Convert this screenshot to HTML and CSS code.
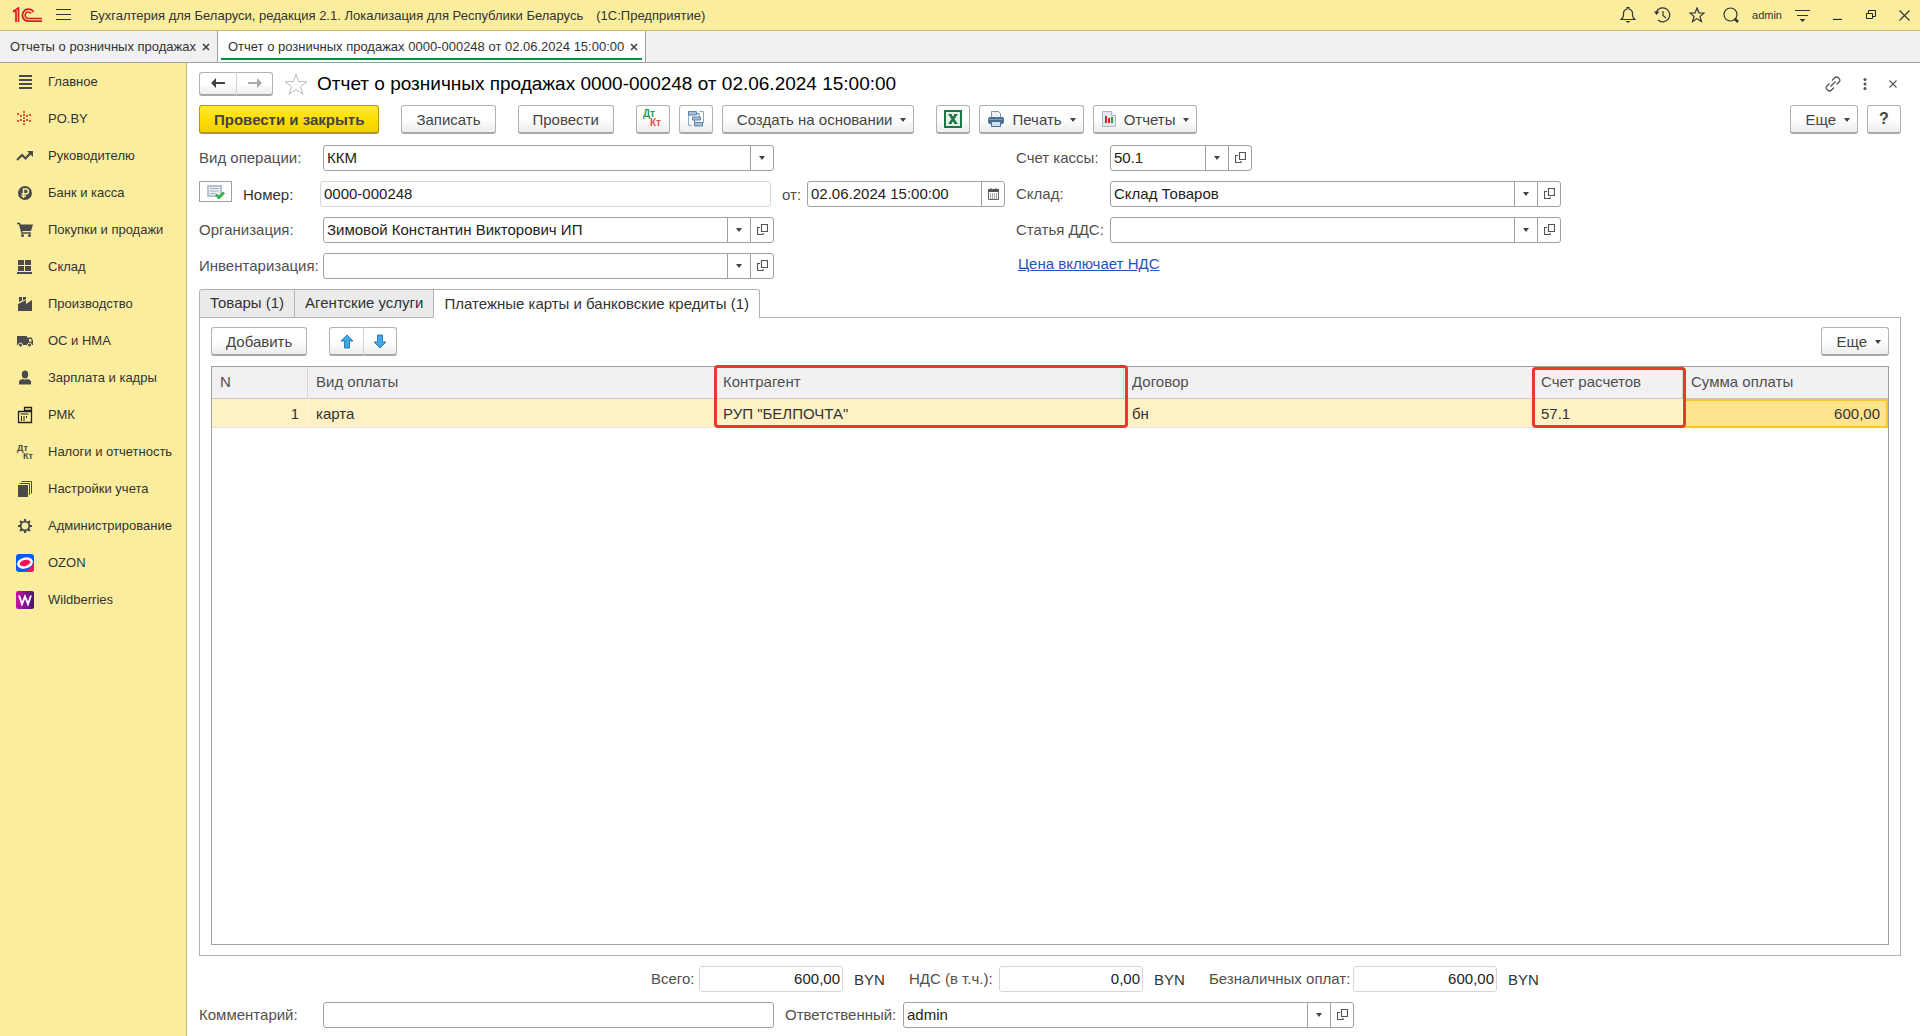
FILE: index.html
```html
<!DOCTYPE html>
<html lang="ru">
<head>
<meta charset="utf-8">
<title>Отчет о розничных продажах</title>
<link rel="stylesheet" href="styles.css">
</head>
<body>
<svg class="defs" aria-hidden="true">
  <symbol id="i-open" viewBox="0 0 11 11"><path d="M4.500 .5h6v7h-6zM3 3.500H.500v7h5.500V9" fill="none" stroke="#555" stroke-width="1.200"/></symbol>
  <symbol id="i-caret" viewBox="0 0 6 4"><path d="M0 0h6L3 4z" fill="#444"/></symbol>
</svg>
<div class="app">
  <header class="titlebar">
    <svg class="logo" width="30" height="16" viewBox="0 0 30 16" fill="none" stroke="#d5201f"><path d="M1 4.500h3V15M1 4.500L6.500 1v14" stroke-width="1.700"/><path d="M21.500 5A6 6 0 1 0 16 14.200H30" stroke-width="1.700"/><path d="M19 6.500A3.200 3.200 0 1 0 16 11.400H30" stroke-width="1.500"/></svg>
    <button class="icon-btn menu" aria-label="Меню"><svg width="15" height="12" viewBox="0 0 15 12" stroke="#333"><path d="M0 .5h15M0 5.500h15M0 10.500h15"/></svg></button>
    <span class="app-name">Бухгалтерия для Беларуси, редакция 2.1. Локализация для Республики Беларусь</span>
    <span class="app-kind">(1С:Предприятие)</span>
    <div class="title-tools">
      <button class="icon-btn info" aria-label="Уведомления"><svg width="16" height="16" viewBox="0 0 16 16" fill="none" stroke="#333" stroke-width="1.200"><path d="M1 12.500h14Q12.500 11 12.500 8V6.500Q12.500 3 9 2V.5H7V2Q3.500 3 3.500 6.500V8Q3.500 11 1 12.500z"/><path d="M5.500 14h5L8 16z" fill="#333" stroke="none"/></svg></button>
      <button class="icon-btn info" aria-label="История"><svg width="17" height="16" viewBox="0 0 17 16" fill="none" stroke="#333" stroke-width="1.200"><path d="M2.300 5A7 7 0 1 1 4 13M9 4v4.500l3 2.500"/><path d="M0 4.500h5.500L2.500 8z" fill="#333" stroke="none"/></svg></button>
      <button class="icon-btn info" aria-label="Избранное"><svg width="16" height="16" viewBox="0 0 16 16" fill="none" stroke="#333" stroke-width="1.200"><path d="M8 1l1.900 4.800 5.100.300-4 3.300 1.400 5.100L8 11.600l-4.400 2.900L5 9.400 1 6.100l5.100-.300z"/></svg></button>
      <button class="icon-btn" aria-label="Поиск"><svg width="16" height="16" viewBox="0 0 16 16" fill="none" stroke="#333" stroke-width="1.200"><circle cx="7.500" cy="7.500" r="6.500"/><path d="M11.500 11.500L15 15" stroke-width="2.500"/></svg></button>
      <span class="user">admin</span>
      <button class="icon-btn" aria-label="Настройки"><svg width="15" height="13" viewBox="0 0 15 13"><path d="M0 1.500h15M2 6.500h11" stroke="#333" stroke-width="1.200"/><path d="M4.500 10h6l-3 3z" fill="#333"/></svg></button>
      <button class="icon-btn win" aria-label="Свернуть"><svg width="10" height="10" viewBox="0 0 10 10"><path d="M0 9.500h9" stroke="#222" stroke-width="1.200"/></svg></button>
      <button class="icon-btn win" aria-label="Развернуть"><svg width="10" height="10" viewBox="0 0 10 10" fill="none" stroke="#222"><path d="M.5 3.500h6v5h-6zM2.500 3V.5h7v6H7"/></svg></button>
      <button class="icon-btn win" aria-label="Закрыть"><svg width="11" height="11" viewBox="0 0 11 11" stroke="#333" stroke-width="1.100"><path d="M.5.5l10 10M10.500.5l-10 10"/></svg></button>
    </div>
  </header>
  <nav class="doc-tabs">
    <div class="doc-tab"><a href="#">Отчеты о розничных продажах</a><button class="x" aria-label="Закрыть вкладку"><svg width="8" height="8" viewBox="0 0 8 8" stroke="#444" stroke-width="1.600"><path d="M1 1l6 6M7 1L1 7"/></svg></button></div>
    <div class="doc-tab current"><a href="#">Отчет о розничных продажах 0000-000248 от 02.06.2024 15:00:00</a><button class="x" aria-label="Закрыть вкладку"><svg width="8" height="8" viewBox="0 0 8 8" stroke="#444" stroke-width="1.600"><path d="M1 1l6 6M7 1L1 7"/></svg></button></div>
  </nav>
  <div class="body">
    <nav class="side">
      <a href="#"><svg viewBox="0 0 18 18"><path d="M3 3h13M3 7h13M3 11h13M3 15h13" stroke="#4a4a4a" stroke-width="2"/></svg>Главное</a>
      <a href="#"><svg viewBox="0 0 18 18"><path d="M7 1h2v2H7zM7 4h2v2H7zM7 7h2v2H7zM7 10h2v2H7zM7 13h2v2H7zM4 5h2v2H4zM10 5h2v2h-2zM4 9h2v2H4zM10 9h2v2h-2zM1 3h2v2H1zM13 4h2v2h-2zM1 10h2v2H1zM13 10h2v2h-2z" fill="#e0522e"/></svg>PO.BY</a>
      <a href="#"><svg viewBox="0 0 18 18"><path d="M1 13l5-5 3.500 3.500L14.500 6" fill="none" stroke="#4a4a4a" stroke-width="2.200"/><path d="M11 4h6v6z" fill="#4a4a4a"/></svg>Руководителю</a>
      <a href="#"><svg viewBox="0 0 18 18"><circle cx="9" cy="9" r="7" fill="#4a4a4a"/><path d="M7.500 14V5H10a2.300 2.300 0 0 1 0 4.800H5.500M5.500 12H10" fill="none" stroke="#fbed9e" stroke-width="1.500"/></svg>Банк и касса</a>
      <a href="#"><svg viewBox="0 0 18 18"><path d="M1 2.500h2.500L6 12h9" fill="none" stroke="#4a4a4a" stroke-width="1.500"/><path d="M4 3.500h13L15 10H5.500z" fill="#4a4a4a"/><circle cx="6.500" cy="14.500" r="1.500" fill="#4a4a4a"/><circle cx="13.500" cy="14.500" r="1.500" fill="#4a4a4a"/></svg>Покупки и продажи</a>
      <a href="#"><svg viewBox="0 0 18 18"><path d="M2 2h6v5H2zM9 2h6v5H9zM2 8h6v5H2zM9 8h6v5H9zM1 14h15v2H1z" fill="#4a4a4a"/></svg>Склад</a>
      <a href="#"><svg viewBox="0 0 18 18"><path d="M2 9l8-4v4l6-4v11H2zM3 2h3v3.500L3 7zM7 2h3v2L7 5.500z" fill="#4a4a4a"/></svg>Производство</a>
      <a href="#"><svg viewBox="0 0 18 18"><path d="M1 4h10v9H1zM11 5.500h4.500L17 8.500V13h-6z" fill="#4a4a4a"/><path d="M13 7h2l1 2.500h-3z" fill="#fbed9e"/><circle cx="4.500" cy="13" r="2" fill="#4a4a4a" stroke="#fbed9e"/><circle cx="13.500" cy="13" r="2" fill="#4a4a4a" stroke="#fbed9e"/></svg>ОС и НМА</a>
      <a href="#"><svg viewBox="0 0 18 18"><ellipse cx="9" cy="5.500" rx="3.200" ry="4" fill="#4a4a4a"/><path d="M3 15.500V13Q3 10.500 7 10q2 1.500 4 0 4 .5 4 3v2.500z" fill="#4a4a4a"/></svg>Зарплата и кадры</a>
      <a href="#"><svg viewBox="0 0 18 18" fill="none" stroke="#222"><path d="M2.500 5.500h13v11h-13zM8.500 1.500h7v3h-7z" stroke-width="1.300"/><path d="M4.500 8h8M5.500 10v5M8 10v5M10.500 10v2M12 4.500v1"/></svg>РМК</a>
      <a href="#"><svg viewBox="0 0 18 18" class="dk"><text x="1" y="8">Дт</text><text x="7" y="16">Кт</text></svg>Налоги и отчетность</a>
      <a href="#"><svg viewBox="0 0 18 18"><path d="M2 5h10v12H2z" fill="#4a4a4a"/><path d="M3.500 3.500h10V15M5.500 1.500h10V13.500" fill="none" stroke="#4a4a4a"/></svg>Настройки учета</a>
      <a href="#"><svg viewBox="0 0 18 18" fill="none" stroke="#4a4a4a"><circle cx="9" cy="9" r="4.300" stroke-width="1.800"/><path d="M9 2v2.500M9 13.500V16M2 9h2.500M13.500 9H16M4.050 4.050l1.800 1.800M12.150 12.150l1.800 1.800M4.050 13.950l1.800-1.800M12.150 5.850l1.800-1.800" stroke-width="2.200"/></svg>Администрирование</a>
      <a href="#"><svg viewBox="0 0 18 18"><rect width="18" height="18" rx="3" fill="#005bff"/><path d="M3 18q10 0 15-9v6q0 3-3 3z" fill="#f91155"/><ellipse cx="9" cy="9" rx="8" ry="5.500" fill="#fff" transform="rotate(-14 9 9)"/><ellipse cx="9" cy="9" rx="5.500" ry="3" fill="#f91155" transform="rotate(-14 9 9)"/></svg>OZON</a>
      <a href="#"><svg viewBox="0 0 18 18"><defs><linearGradient id="wb"><stop offset="0" stop-color="#cb11ab"/><stop offset="1" stop-color="#481173"/></linearGradient></defs><rect width="18" height="18" rx="2" fill="url(#wb)"/><path d="M3 4.500L6 13 9 5.500 12 13l3-8.500" fill="none" stroke="#fff" stroke-width="1.900"/></svg>Wildberries</a>
    </nav>
    <main class="doc">
      <div class="doc-head">
        <div class="pair">
          <button aria-label="Назад"><svg width="14" height="10" viewBox="0 0 14 10"><path d="M5 0v4h9v2H5v4L0 5z" fill="#444"/></svg></button>
          <button aria-label="Вперед"><svg width="14" height="10" viewBox="0 0 14 10"><path d="M9 0v4H0v2h9v4l5-5z" fill="#aaa"/></svg></button>
        </div>
        <svg class="fav" width="24" height="22" viewBox="0 0 24 22" fill="none" stroke="#b5b9bd"><path d="M12 1l2.700 7.500 8.300.200-6.500 4.900 2.500 7.600-7-4.600-7 4.600 2.500-7.600L1 8.700l8.300-.200z"/></svg>
        <h1>Отчет о розничных продажах 0000-000248 от 02.06.2024 15:00:00</h1>
        <div class="head-tools">
          <button class="icon-btn" aria-label="Ссылка"><svg width="16" height="16" viewBox="0 0 16 16" fill="none" stroke="#555" stroke-width="1.300"><path d="M7 4.500L9.500 2q2-2 4 0 2.500 2 .5 4L11.500 8.500M9 11.500L6.500 14q-2 2-4 0-2.500-2-.5-4L4.500 7.500M5.500 10.500l5-5"/></svg></button>
          <button class="icon-btn" aria-label="Действия"><svg width="4" height="12" viewBox="0 0 4 12" fill="#555"><circle cx="2" cy="1.500" r="1.500"/><circle cx="2" cy="6" r="1.500"/><circle cx="2" cy="10.500" r="1.500"/></svg></button>
          <button class="icon-btn" aria-label="Закрыть"><svg width="8" height="8" viewBox="0 0 8 8" stroke="#555" stroke-width="1.100"><path d="M.5.5l7 7M7.500.5l-7 7"/></svg></button>
        </div>
      </div>
      <div class="toolbar">
        <div class="group"><button class="btn primary">Провести и закрыть</button></div>
        <div class="group"><button class="btn">Записать</button></div>
        <div class="group"><button class="btn">Провести</button></div>
        <div class="group">
          <button class="btn square" aria-label="Показать проводки"><svg width="20" height="20" viewBox="0 0 20 20" class="dk dk-color"><text x="0" y="8">Дт</text><text x="7" y="17">Кт</text></svg></button>
          <button class="btn square" aria-label="Структура подчиненности"><svg width="18" height="18" viewBox="0 0 18 18"><path d="M3.500 5.500h-2v10h3M12.500 1.500h4V13H15" fill="none" stroke="#8aa9c4"/><g fill="#a4c0da" stroke="#5a86ad"><path d="M1.500 1.500h8v3.500h-8zM5.500 7h8v3h-8zM7.500 12.500h8v3.500h-8z"/></g><path d="M9.500 3.500H12V7M7.500 10v4" fill="none" stroke="#5a86ad"/></svg></button>
          <button class="btn">Создать на основании<svg class="caret"><use href="#i-caret"/></svg></button>
        </div>
        <div class="group">
          <button class="btn square" aria-label="Excel"><svg width="18" height="18" viewBox="0 0 18 18"><path d="M1 1h16v16H1z" fill="#e4f1e8" stroke="#1d7646" stroke-width="2"/><path d="M6 4.500l6 9M12 4.500l-6 9" stroke="#1d7646" stroke-width="2.600"/><path d="M4.500 4.500h3M10.500 4.500h3M4.500 13.500h3M10.500 13.500h3" stroke="#1d7646"/></svg></button>
          <button class="btn with-icon"><svg width="16" height="16" viewBox="0 0 16 16"><path d="M3.500.5h7l2 2V7h-9z" fill="#eef3f7" stroke="#7e97ab"/><rect y="6" width="16" height="7" rx="2" fill="#4a6f8e"/><path d="M1 8.500h14" stroke="#7da0bd"/><path d="M3.500 10.500h9v5h-9z" fill="#cfe0ee" stroke="#4a6f8e"/></svg>Печать<svg class="caret"><use href="#i-caret"/></svg></button>
          <button class="btn with-icon"><svg width="14" height="16" viewBox="0 0 14 16"><path d="M.5.5h9l4 4v11H.500z" fill="#e3e9ef" stroke="#a9b6c3"/><path d="M9.500.5v4h4" fill="#fff" stroke="#a9b6c3"/><path d="M3 5h2v7H3z" fill="#e21f1f"/><path d="M6 7h2v5H6z" fill="#e21f1f"/><path d="M9 6h2v6H9z" fill="#2da12d"/></svg>Отчеты<svg class="caret"><use href="#i-caret"/></svg></button>
        </div>
        <div class="group end">
          <button class="btn">Еще<svg class="caret"><use href="#i-caret"/></svg></button>
          <button class="btn square help">?</button>
        </div>
      </div>
      <form class="fields">
        <div class="col-left">
          <div class="row"><label class="lab" for="op">Вид операции:</label><div class="field w-main"><select id="op"><option>ККМ</option></select><span class="cell"><svg class="caret"><use href="#i-caret"/></svg></span></div></div>
          <div class="row number-row">
            <button type="button" class="status" aria-label="Проведен"><svg width="18" height="14" viewBox="0 0 18 14"><path d="M1 1h13v10H1z" fill="#eef2f7" stroke="#9fb0c3" stroke-width="1.500"/><path d="M3 3.500h9M3 6h9M3 8.500h6" stroke="#9fb0c3"/><path d="M9 9.500l3 3L17 7.500" fill="none" stroke="#37b24a" stroke-width="2.800"/></svg></button>
            <label class="num-lab" for="num">Номер:</label><div class="field w-main readonly"><input id="num" value="0000-000248" readonly></div>
            <label class="from-lab" for="date">от:</label><div class="field w-date"><input id="date" value="02.06.2024 15:00:00"><button type="button" class="cell" aria-label="Календарь"><svg width="11" height="12" viewBox="0 0 11 12"><path d="M.5 1.500h10v10H.500z" fill="#fff" stroke="#666"/><path d="M0 1h11v3H0z" fill="#555"/><path d="M2 6h7M2 8h7M2 10h7" stroke="#555" stroke-dasharray="1 1"/><path d="M3 0v2M8 0v2" stroke="#555"/></svg></button></div>
          </div>
          <div class="row"><label class="lab" for="org">Организация:</label><div class="field w-main"><input id="org" value="Зимовой Константин Викторович ИП"><button type="button" class="cell" aria-label="Выбрать"><svg class="caret"><use href="#i-caret"/></svg></button><button type="button" class="cell" aria-label="Открыть"><svg class="open"><use href="#i-open"/></svg></button></div></div>
          <div class="row"><label class="lab" for="inv">Инвентаризация:</label><div class="field w-main"><input id="inv"><button type="button" class="cell" aria-label="Выбрать"><svg class="caret"><use href="#i-caret"/></svg></button><button type="button" class="cell" aria-label="Открыть"><svg class="open"><use href="#i-open"/></svg></button></div></div>
        </div>
        <div class="col-right">
          <div class="row"><label class="lab" for="acc">Счет кассы:</label><div class="field w-short"><input id="acc" value="50.1"><button type="button" class="cell" aria-label="Выбрать"><svg class="caret"><use href="#i-caret"/></svg></button><button type="button" class="cell" aria-label="Открыть"><svg class="open"><use href="#i-open"/></svg></button></div></div>
          <div class="row"><label class="lab" for="wh">Склад:</label><div class="field w-main"><input id="wh" value="Склад Товаров"><button type="button" class="cell" aria-label="Выбрать"><svg class="caret"><use href="#i-caret"/></svg></button><button type="button" class="cell" aria-label="Открыть"><svg class="open"><use href="#i-open"/></svg></button></div></div>
          <div class="row"><label class="lab" for="dds">Статья ДДС:</label><div class="field w-main"><input id="dds"><button type="button" class="cell" aria-label="Выбрать"><svg class="caret"><use href="#i-caret"/></svg></button><button type="button" class="cell" aria-label="Открыть"><svg class="open"><use href="#i-open"/></svg></button></div></div>
          <a class="vat" href="#">Цена включает НДС</a>
        </div>
      </form>
      <div class="tabs" role="tablist">
        <button role="tab">Товары (1)</button><button role="tab">Агентские услуги</button><button role="tab" class="active" aria-selected="true">Платежные карты и банковские кредиты (1)</button>
      </div>
      <section class="panel">
        <div class="toolbar">
          <div class="group"><button class="btn">Добавить</button></div>
          <div class="pair tall">
            <button aria-label="Вверх"><svg width="14" height="15" viewBox="0 0 14 15"><path d="M7 1l6 6H9.500v7h-5V7H1z" fill="#43a7e6" stroke="#2a7db5"/></svg></button>
            <button aria-label="Вниз"><svg width="14" height="15" viewBox="0 0 14 15"><path d="M7 14l6-6H9.500V1h-5v7H1z" fill="#43a7e6" stroke="#2a7db5"/></svg></button>
          </div>
          <div class="group end"><button class="btn">Еще<svg class="caret"><use href="#i-caret"/></svg></button></div>
        </div>
        <div class="grid">
          <table>
            <colgroup><col class="c-n"><col class="c-kind"><col class="c-wide"><col class="c-wide"><col class="c-acc"><col></colgroup>
            <thead><tr><th>N</th><th>Вид оплаты</th><th class="mark">Контрагент</th><th>Договор</th><th class="mark low">Счет расчетов</th><th>Сумма оплаты</th></tr></thead>
            <tbody><tr><td class="num">1</td><td>карта</td><td>РУП "БЕЛПОЧТА"</td><td>бн</td><td>57.1</td><td class="num selected">600,00</td></tr></tbody>
          </table>
        </div>
      </section>
      <div class="totals">
        <label for="t1">Всего:</label><div class="field readonly sum"><input id="t1" value="600,00" readonly></div><span class="cur">BYN</span>
        <label for="t2">НДС (в т.ч.):</label><div class="field readonly sum"><input id="t2" value="0,00" readonly></div><span class="cur">BYN</span>
        <label for="t3">Безналичных оплат:</label><div class="field readonly sum"><input id="t3" value="600,00" readonly></div><span class="cur">BYN</span>
      </div>
      <div class="row footer">
        <label class="lab" for="com">Комментарий:</label><div class="field w-main"><input id="com"></div>
        <label class="resp" for="resp">Ответственный:</label><div class="field w-main"><input id="resp" value="admin"><button type="button" class="cell" aria-label="Выбрать"><svg class="caret"><use href="#i-caret"/></svg></button><button type="button" class="cell" aria-label="Открыть"><svg class="open"><use href="#i-open"/></svg></button></div>
      </div>
    </main>
  </div>
</div>
</body>
</html>
```
FILE: styles.css
```css
* { box-sizing: border-box; }
body {
  margin: 0;
  font-family: "Liberation Sans", Arial, sans-serif;
  font-size: 15px;
  color: #333;
  background: #fff;
}
button, input, select { font: inherit; color: inherit; }
button { padding: 0; cursor: pointer; }
svg { display: block; flex: none; }
.defs { position: absolute; width: 0; height: 0; }
.app { display: flex; flex-direction: column; min-height: 100vh; }
.icon-btn { display: flex; border: 0; background: none; }

/* window title */
.titlebar {
  display: flex;
  align-items: center;
  height: 31px;
  padding: 0 10px 0 12px;
  background: #fbed9e;
  border-bottom: 1px solid #c9bb6c;
  font-size: 13px;
}
.menu { margin: 0 19px 0 14px; }
.app-kind { margin-left: 13px; }
.title-tools { display: flex; align-items: center; gap: 13px; margin-left: auto; }
.user { font-size: 11px; }
.info { margin-right: 5px; }
.win { margin-left: 10px; }

/* open documents */
.doc-tabs {
  display: flex;
  height: 32px;
  background: #f1f1f1;
  border-bottom: 1px solid #a0a0a0;
  font-size: 13px;
}
.doc-tab {
  display: flex;
  align-items: center;
  gap: 6px;
  padding: 0 7px 0 10px;
  border-right: 1px solid #a0a0a0;
}
.doc-tab a { color: #333; text-decoration: none; }
.doc-tab.current {
  background: linear-gradient(#009646, #009646) center bottom 2px / calc(100% - 6px) 2px no-repeat #fff;
}
.x { display: flex; border: 0; background: none; }

.body { display: flex; flex: 1; }

/* sections */
.side {
  flex: none;
  width: 187px;
  background: #fbed9e;
  border-right: 1px solid #c9bb6c;
  font-size: 13px;
}
.side a {
  display: flex;
  align-items: center;
  gap: 14px;
  height: 37px;
  padding-left: 16px;
  color: #333;
  text-decoration: none;
  white-space: nowrap;
}
.side svg { width: 18px; height: 18px; }
.dk text { font-size: 9px; font-weight: bold; fill: #4a4a4a; }
.dk-color text { font-size: 10px; fill: #1a9c50; }
.dk-color text + text { fill: #e2504e; }

/* document form */
.doc {
  display: flex;
  flex-direction: column;
  flex: 1;
  min-width: 0;
  padding: 8px 19px 8px 12px;
}
.doc-head { display: flex; align-items: center; height: 25px; margin-bottom: 9px; }
h1 { margin: 0 0 0 9px; font-size: 19px; font-weight: normal; color: #000; white-space: nowrap; }
.fav { margin-left: 11px; }
.head-tools { display: flex; align-items: center; gap: 22px; margin: 0 4px 0 auto; }

.pair { display: flex; }
.pair button {
  display: flex;
  align-items: center;
  justify-content: center;
  width: 37px;
  height: 24px;
  border: 1px solid #b3b3b3;
  border-bottom: 2px solid #a8a8a8;
  background: linear-gradient(#fff 50%, #ececec);
}
.pair button:first-child { border-radius: 3px 0 0 3px; border-right-width: 0; }
.pair button:last-child { border-radius: 0 3px 3px 0; border-left-color: #d0d0d0; }
.pair.tall button { width: 34px; height: 29px; }

.toolbar { display: flex; gap: 22px; }
.group { display: flex; gap: 9px; }
.group.end { margin-left: auto; }
.btn {
  display: flex;
  align-items: center;
  justify-content: center;
  height: 29px;
  padding: 0 14px;
  border: 1px solid #b3b3b3;
  border-bottom: 2px solid #a8a8a8;
  border-radius: 3px;
  background: linear-gradient(#fff 50%, #ececec);
  color: #444;
  white-space: nowrap;
}
.btn.primary {
  background: linear-gradient(#ffe838, #ffdf00 50%, #efd000);
  border-color: #b09b00;
  font-weight: bold;
}
.btn.square { width: 34px; padding: 0; }
.btn .caret { margin: 2px 0 0 8px; }
.btn:has(.caret) { padding-right: 7px; }
.btn.with-icon { padding-left: 8px; gap: 8px; }
.btn.with-icon .caret { margin-left: 0; }
.btn.help { font-size: 16px; font-weight: bold; }
.caret { width: 6px; height: 4px; }
.open { width: 11px; height: 11px; }

.fields { display: flex; gap: 11px; margin-top: 11px; }
.col-left, .col-right { display: flex; flex-direction: column; gap: 10px; }
.col-left { width: 806px; }
.row { display: flex; align-items: center; color: #505050; }
.lab { padding-bottom: 1px; }
.col-left .lab, .footer .lab { width: 124px; white-space: nowrap; }
.col-right .lab { width: 94px; white-space: nowrap; }
.field {
  display: flex;
  height: 26px;
  border: 1px solid #a0a0a0;
  border-radius: 3px;
  background: #fff;
  color: #222;
  overflow: hidden;
}
.w-main { width: 451px; }
.w-date { width: 198px; }
.w-short { width: 142px; }
.field input, .field select {
  flex: 1;
  min-width: 0;
  padding: 0 3px 2px;
  border: 0;
  outline: 0;
  background: none;
  appearance: none;
}
.cell {
  display: flex;
  align-items: center;
  justify-content: center;
  flex: none;
  width: 23px;
  padding-bottom: 1px;
  border: 0;
  border-left: 1px solid #a0a0a0;
  background: none;
}
.field.readonly { border-color: #d6d6d6; }
.status {
  display: flex;
  align-items: center;
  justify-content: center;
  align-self: flex-start;
  width: 33px;
  height: 21px;
  border: 1px solid #a0a0a0;
  background: #fff;
}
.num-lab { width: 77px; margin-left: 11px; color: #333; }
.from-lab { width: 25px; margin-left: 11px; }
.vat { align-self: flex-start; margin-left: 2px; padding-top: 2px; color: #1d55b8; }

/* pages */
.tabs { display: flex; margin-top: 10px; }
.tabs button {
  height: 28px;
  padding: 0 10px 2px;
  border: 1px solid #b3b3b3;
  border-width: 1px 1px 0 0;
  background: #ebebeb;
}
.tabs button:first-child { border-left-width: 1px; border-radius: 3px 0 0 0; }
.tabs .active { z-index: 1; height: 29px; margin-bottom: -1px; border-radius: 0 3px 0 0; background: #fff; }
.panel {
  display: flex;
  flex-direction: column;
  flex: 1;
  padding: 9px 11px 10px;
  border: 1px solid #b3b3b3;
}
.grid { flex: 1; margin-top: 10px; border: 1px solid #a0a0a0; }
table { width: 100%; table-layout: fixed; border-collapse: separate; border-spacing: 0; }
.c-n { width: 96px; }
.c-kind { width: 407px; }
.c-wide { width: 409px; }
.c-acc { width: 150px; }
th, td { padding: 0 8px; text-align: left; font-weight: normal; white-space: nowrap; }
th {
  position: relative;
  height: 32px;
  padding-bottom: 2px;
  background: #f1f1f1;
  border-bottom: 1px solid #c8c8c8;
  border-right: 1px solid #d4d4d4;
  color: #505050;
}
td { height: 29px; background: #fef1c5; border-right: 1px solid #fff8e0; border-bottom: 1px solid #e4e4e4; }
th:last-child, td:last-child { border-right: 0; }
td.num { text-align: right; }
td.selected { padding-right: 6px; background: #ffe48e; border: 2px solid #fbc91e; }
.mark::after {
  content: "";
  position: absolute;
  z-index: 2;
  inset: -2px -5px -30px -1px;
  border: 3px solid #e63a2e;
  border-radius: 4px;
}
.mark.low::after { top: 0; right: -4px; }

.totals {
  display: flex;
  align-items: center;
  margin: 10px 0;
  padding-left: 452px;
  color: #505050;
}
.totals label { width: 90px; text-align: right; padding: 0 7px 1px 0; white-space: nowrap; }
.totals label:first-child { width: 48px; }
.totals label:last-of-type { width: 144px; }
.sum { width: 144px; }
.sum input { padding-right: 2px; text-align: right; }
.cur { width: 66px; padding-left: 11px; color: #333; }
.resp { width: 129px; padding: 0 0 1px 11px; }
```
